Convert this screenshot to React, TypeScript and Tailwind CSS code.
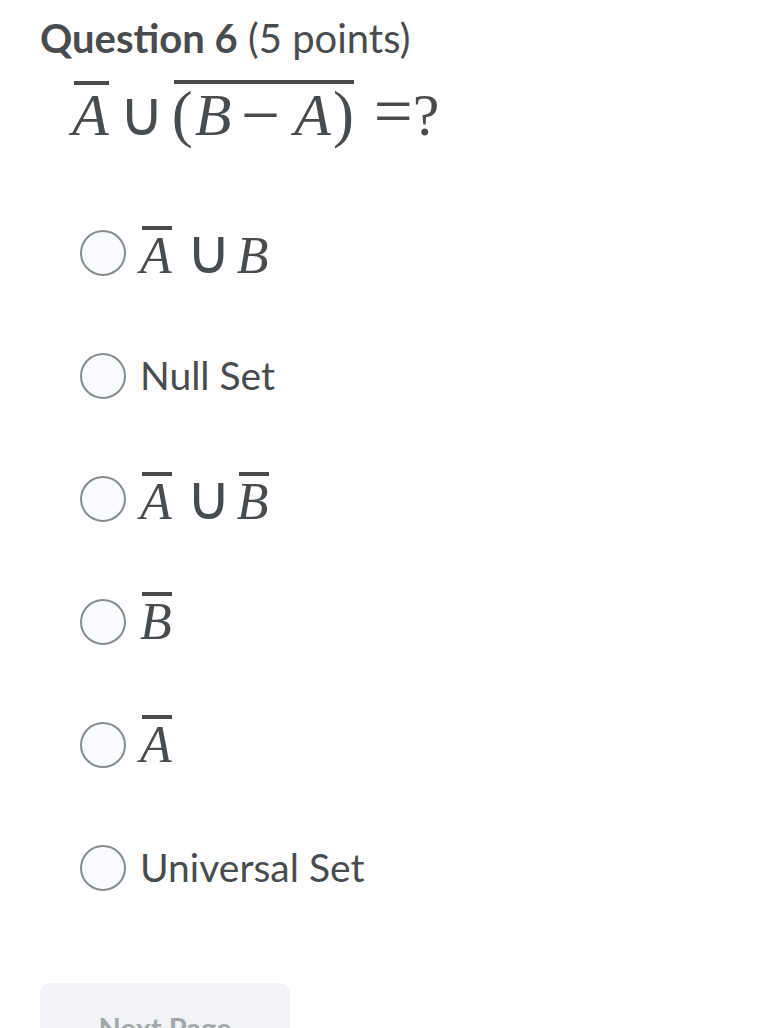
import React from "react";

const serif = "font-['Liberation_Serif','DejaVu_Serif',serif]";

function Bar({ children }: { children: React.ReactNode }) {
  return (
    <span className="relative inline-block">
      <span className="absolute left-[2px] right-0 top-[-4px] h-[4px] bg-[#494c4e]" />
      {children}
    </span>
  );
}

function Letter({ ch }: { ch: string }) {
  return <span className="italic">{ch}</span>;
}

function Cup({ className }: { className: string }) {
  return (
    <span className={`font-['Lato',sans-serif] not-italic font-light ${className}`}>
      ∪
    </span>
  );
}

function Radio() {
  return (
    <span className="h-[46px] w-[46px] shrink-0 rounded-full border-2 border-[#868c8f] bg-[#f9fbff]" />
  );
}

const optCup = "ml-[14px] mr-[6px] text-[1.2em]";

const options: React.ReactNode[] = [
  <span className={`${serif} text-[52px] leading-[52px]`}>
    <Bar><Letter ch="A" /></Bar>
    <Cup className={optCup} />
    <Letter ch="B" />
  </span>,
  <span className="text-[39px]">Null Set</span>,
  <span className={`${serif} text-[52px] leading-[52px]`}>
    <Bar><Letter ch="A" /></Bar>
    <Cup className={optCup} />
    <Bar><Letter ch="B" /></Bar>
  </span>,
  <span className={`${serif} text-[52px] leading-[52px]`}>
    <Bar><Letter ch="B" /></Bar>
  </span>,
  <span className={`${serif} text-[52px] leading-[52px]`}>
    <Bar><Letter ch="A" /></Bar>
  </span>,
  <span className="text-[39px]">Universal Set</span>,
];

export default function App() {
  return (
    <div className="min-h-screen overflow-hidden bg-white pl-[40px] pt-[14px] font-['Lato',sans-serif] text-[#494c4e]">
      <h1 className="text-[40px] leading-[48px]">
        <span className="font-bold">Question 6</span> (5 points)
      </h1>

      {/* Question */}
      <div className={`${serif} ml-[32px] mt-[19px] text-[60px] leading-[60px]`}>
        <Bar><Letter ch="A" /></Bar>
        <Cup className="ml-[10px] mr-[8px] text-[62px]" />
        <Bar>
          <span className="text-[1.05em]">(</span>
          <span className="ml-[2px]"><Letter ch="B" /></span>
          <span className="ml-[10px] mr-[14px] align-[-3px] text-[1.15em]">−</span>
          <Letter ch="A" />
          <span className="ml-[2px] text-[1.05em]">)</span>
        </Bar>
        <span className="ml-[20px] text-[1.15em]">=</span>
        <span>?</span>
      </div>

      {/* Answers */}
      <div className="ml-[40px] mt-[46px] flex flex-col">
        {options.map((opt, i) => (
          <label key={i} className="flex h-[123px] items-center gap-[14px]">
            <Radio />
            {opt}
          </label>
        ))}
      </div>

      <button className="mt-[54px] block h-[70px] w-[250px] rounded-[10px] bg-[#f1f3f6] pt-[21px] text-[29px] font-bold leading-[1.2] text-[#a3a7ab]">
        <span className="block">Next Page</span>
      </button>
    </div>
  );
}
